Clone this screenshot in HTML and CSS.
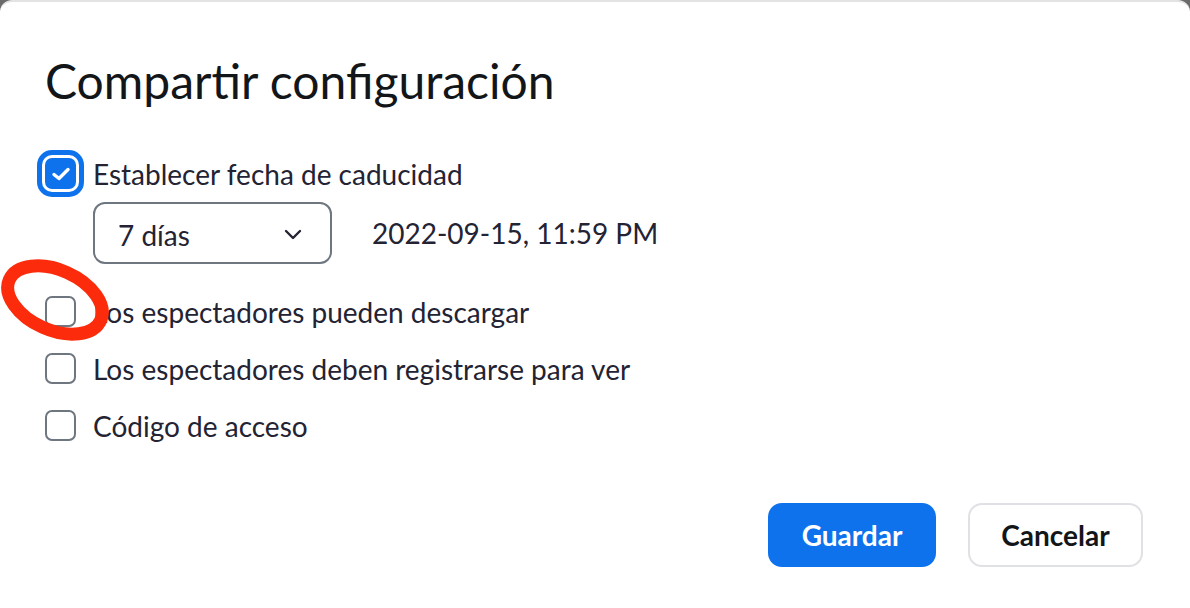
FILE: index.html
```html
<!DOCTYPE html>
<html lang="es">
<head>
    <meta charset="UTF-8">
    <meta name="viewport" content="width=device-width, initial-scale=1.0">
    <title>Compartir configuración</title>
    <link rel="stylesheet" href="styles.css">
</head>
<body>
    <div class="dialog">
        <h1>Compartir configuración</h1>

        <div class="option">
            <span class="checkbox checked">
                <svg width="20" height="16" viewBox="0 0 20 16"><path d="M3 8.5 L8 12.5 L17 3.5" fill="none" stroke="#fff" stroke-width="3.4" stroke-linecap="round" stroke-linejoin="round"/></svg>
            </span>
            <span class="label">Establecer fecha de caducidad</span>
        </div>

        <div class="expire-row">
            <div class="select">
                <span>7 días</span>
                <svg width="18" height="11" viewBox="0 0 18 11"><path d="M2 2 L9 9 L16 2" fill="none" stroke="#232333" stroke-width="2.4" stroke-linecap="round" stroke-linejoin="round"/></svg>
            </div>
            <span class="expire-date">2022-09-15, 11:59 PM</span>
        </div>

        <div class="option">
            <span class="checkbox"></span>
            <span class="label">Los espectadores pueden descargar</span>
        </div>
        <div class="option">
            <span class="checkbox"></span>
            <span class="label">Los espectadores deben registrarse para ver</span>
        </div>
        <div class="option">
            <span class="checkbox"></span>
            <span class="label">Código de acceso</span>
        </div>

        <div class="actions">
            <button class="btn primary">Guardar</button>
            <button class="btn">Cancelar</button>
        </div>

        <svg class="marker" width="130" height="100" viewBox="0 0 130 100">
            <ellipse cx="56" cy="45" rx="50" ry="30" transform="rotate(24 56 45)" fill="none" stroke="#fb2b0c" stroke-width="13"/>
        </svg>
    </div>
</body>
</html>
```

FILE: styles.css
```css
* {
    box-sizing: border-box;
    margin: 0;
    padding: 0;
}

body {
    font-family: Lato, "Noto Sans", sans-serif;
    background-color: #6b6b6b;
    color: #232333;
    width: 1190px;
    height: 608px;
    overflow: hidden;
}

.dialog {
    position: relative;
    background-color: #ffffff;
    width: 1190px;
    height: 608px;
    border-top: 2px solid #e3e3e3;
    border-radius: 12px 12px 0 0;
    padding: 51px 47px 0 45px;
}

h1 {
    font-size: 48px;
    line-height: 56px;
    font-weight: 400;
    color: #131619;
    margin-bottom: 36px;
}

.option {
    display: flex;
    align-items: center;
    height: 57px;
    gap: 17px;
}

.label {
    font-size: 28px;
}

.checkbox {
    width: 31px;
    height: 31px;
    border: 2px solid #6e7680;
    border-radius: 7px;
    display: flex;
    align-items: center;
    justify-content: center;
    flex-shrink: 0;
}

.checkbox.checked {
    background-color: #0e72ed;
    border-color: #0e72ed;
    box-shadow: 0 0 0 3px #ffffff, 0 0 0 8px #0e72ed;
}

.expire-row {
    display: flex;
    align-items: center;
    gap: 40px;
    margin-left: 48px;
    margin-bottom: 19px;
}

.select {
    width: 239px;
    height: 62px;
    border: 2px solid #6e7680;
    border-radius: 12px;
    display: flex;
    align-items: center;
    justify-content: space-between;
    padding: 3px 28px 0 23px;
    font-size: 28px;
}

.expire-date {
    font-size: 28px;
}

.actions {
    display: flex;
    justify-content: flex-end;
    gap: 32px;
    margin-top: 49px;
}

.btn {
    font-family: Lato, "Noto Sans", sans-serif;
    font-size: 28px;
    font-weight: 700;
    height: 64px;
    border-radius: 14px;
    border: 2px solid #dfe1e4;
    background-color: #ffffff;
    color: #131619;
    width: 175px;
}

.btn.primary {
    background-color: #0e72ed;
    border-color: #0e72ed;
    color: #ffffff;
    width: 168px;
}

.marker {
    position: absolute;
    left: -1px;
    top: 253px;
}
```
